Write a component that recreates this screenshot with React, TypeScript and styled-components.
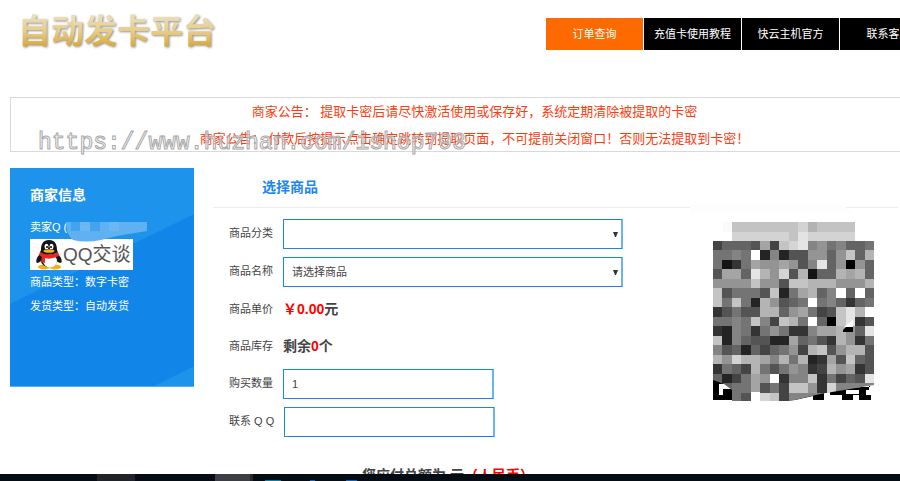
import React from "react";
import styled, { createGlobalStyle } from "styled-components";

const Global = createGlobalStyle`
  * { box-sizing: border-box; }
  body {
    margin: 0;
    background: #fff;
    color: #444;
    font: 11px/20px "Liberation Sans", "Noto Sans CJK SC", sans-serif;
  }
  button, input, select { font: inherit; color: inherit; }
`;

const Page = styled.div`
  display: flex;
  flex-direction: column;
  height: 100vh;
  overflow: hidden;
`;

const Content = styled.div`
  flex: 1;
  min-height: 0;
  overflow: hidden;
`;

const Header = styled.header`
  display: flex;
  justify-content: space-between;
  height: 97px;
  padding-left: 18px;
`;

const Logo = styled.h1`
  margin: 6px 0 0;
  height: 48px;
  font: 700 33px/46px "Noto Sans CJK SC", sans-serif;
  white-space: nowrap;
  color: transparent;
  background: linear-gradient(#ebdcb4 25%, #e6cb82 55%, #dcab38 82%);
  background-clip: text;
  filter: drop-shadow(1px 1px 1px rgba(70, 70, 80, 0.6));
`;

const Nav = styled.nav`
  display: flex;
  gap: 1px;
  width: 354px;
  margin-top: 18px;
  overflow: hidden;
`;

const NavLink = styled.a<{ $active?: boolean }>`
  flex: none;
  width: 97px;
  height: 32px;
  line-height: 32px;
  text-align: center;
  text-decoration: none;
  color: #fff;
  background: ${(p) => (p.$active ? "#ff6a00" : "#000")};
`;

const Notice = styled.section`
  position: relative;
  height: 55px;
  margin-left: 10px;
  padding-left: 38px;
  border: 1px solid #d9d9d9;
  border-right: 0;
  text-align: center;
  font-size: 13px;
  line-height: 27px;
  color: #ff3c0f;
  white-space: pre;
`;

const NoticeLine = styled.p`
  margin: 0;
  height: 27px;
`;

const Watermark = styled.span`
  position: absolute;
  left: 27px;
  bottom: -6px;
  font: 23px/28px "Liberation Mono", monospace;
  color: rgba(255, 255, 255, 0.5);
  -webkit-text-stroke: 1px #a8a8a8;
`;

const Body = styled.div`
  display: flex;
  gap: 19px;
  align-items: flex-start;
  padding: 16px 0 0 10px;
`;

const Sidebar = styled.aside`
  position: relative;
  flex: none;
  width: 184px;
  height: 219px;
  padding: 17px 20px;
  color: #fff;
  border-bottom: 1px solid #58aef2;
  background: linear-gradient(154deg, #1e93ec 44%, #1285e9 44.3%, #1285e9 93.5%, #1e93ec 93.8%);
`;

const SideTitle = styled.h2`
  margin: 0 0 10px;
  font-size: 14px;
  line-height: 20px;
`;

const SideLine = styled.p`
  margin: 0;
  line-height: 24px;
  height: 24px;
  white-space: pre;
`;

const Smudge = styled.svg`
  position: absolute;
  left: 55px;
  top: 54px;
`;

const ChatLink = styled.a`
  display: flex;
  align-items: center;
  width: 103px;
  height: 31px;
  padding-left: 5px;
  background: #fff;
  color: #555;
  font-size: 19px;
  line-height: 30px;
  text-decoration: none;
  white-space: nowrap;
`;

const Main = styled.main`
  flex: 1;
  min-width: 0;
`;

const SectionTitle = styled.h2`
  margin: 0 2px 0 0;
  padding: 0 0 0 49px;
  height: 40px;
  border-bottom: 1px solid #ededed;
  font-size: 14px;
  line-height: 38px;
  color: #1c86ee;
`;

const Columns = styled.div`
  display: flex;
  justify-content: space-between;
`;

const Form = styled.form`
  flex: 0 1 410px;
  padding: 11px 0 0 16px;
`;

const Row = styled.div<{ $text?: boolean; $indent?: boolean }>`
  display: grid;
  grid-template-columns: ${(p) => (p.$indent ? "55px" : "54px")} 1fr;
  height: ${(p) => (p.$text ? 29 : 30)}px;
  margin-bottom: 8px;
`;

const Label = styled.label`
  line-height: 28px;
  white-space: nowrap;
`;

const SelectBox = styled.div`
  position: relative;
  height: 30px;
`;

const Select = styled.select`
  appearance: none;
  display: block;
  width: 100%;
  height: 30px;
  padding: 0 8px;
  border: 1px solid #1c86e3;
  border-right: 2px solid #6bb2f4;
  border-radius: 0;
  background: #fff;
`;

const Arrow = styled.svg`
  position: absolute;
  right: 5px;
  top: 13px;
  pointer-events: none;
`;

const Input = styled.input`
  width: 211px;
  height: 30px;
  padding: 0 8px;
  border: 1px solid #1c86e3;
  border-right: 2px solid #6bb2f4;
  border-radius: 0;
  background: #fff;
`;

const Value = styled.output`
  font-size: 14px;
  font-weight: 700;
  line-height: 29px;
`;

const Red = styled.span`
  color: #f00;
`;

const Total = styled.p`
  margin: 14px 0 0 149px;
  font-size: 14px;
  font-weight: 700;
  line-height: 32px;
  white-space: pre;
`;

const Code = styled.svg`
  flex: none;
  margin-top: -8px;
`;

const Taskbar = styled.footer`
  flex: none;
  height: 7px;
  background: #050c14;
  overflow: hidden;
`;

const TrayIcons = styled.svg`
  display: block;
`;

const shades = [
  "46665a4cde8978667",
  "7787f282559969c6b",
  "7137a99a958e69096",
  "5aa6eb9d5b166bab6",
  "9999c995ccbbb999b",
  "c57775c27ab68f6f6",
  "c7c72b9567f786367",
  "35755bb69a745cebf",
  "7787c84cb7f60ce35",
  "32873797338aab96e",
  "c2865522a6753b937",
  "8562646794bc59bb5",
  "b9dbba8b7b23a5c65",
  "3764b7579834b9a35",
  "6247a9f388c37465e",
  "8677a574cc93d8888",
  "8875fdc4888888888",
];
const edges = Array.from({ length: 18 }, (_, i) => Math.round((i * 161) / 17));
const topStrip = ["cccccccdbcccc", "ddddddceddddd"];

function Mosaic() {
  return (
    <Code width="210" height="210" viewBox="0 0 210 210" role="img" aria-label="二维码">
      <path d="M0 13L0 6Q2 4 8 4L150 4L165 13Z" fill="#fdfdfd" />
      <g shapeRendering="crispEdges">
        <rect x="33" y="22" width="9" height="10" fill="#fafafa" />
        {topStrip.map((row, y) =>
          row.split("").map((c, x) => (
            <rect
              key={`${x}-${y}`}
              x={42 + edges[x]}
              y={y ? 32 : 22}
              width={edges[x + 1] - edges[x]}
              height={y ? 9 : 10}
              fill={`#${c}3${c}3${c}3`}
            />
          ))
        )}
      </g>
      <path d="M23 180h19v20H23z" fill="#000" />
      <path d="M29 184h13v5h-9v6h-4z" fill="#fff" />
      <path d="M101 200L120 193H134V200H123V196L105 200Z" fill="#000" />
      <path d="M130 194L152 189L181 186V190H172V195H163V200H152V195H140V192Z M179 190h2v-4h-2z M169 190h7v5h5v5h-12z" fill="#000" />
      <path d="M156 190h13v4h-13z" fill="#fff" />
      <clipPath id="code-clip">
        <path d="M23 41H184V185L160 189L130 194L101 201H42V190L34 184L23 180Z" />
      </clipPath>
      <g clipPath="url(#code-clip)" shapeRendering="crispEdges">
        {shades.map((row, y) =>
          row.split("").map((c, x) => (
            <rect
              key={`${x}-${y}`}
              x={23 + edges[x]}
              y={41 + edges[y]}
              width={edges[x + 1] - edges[x]}
              height={edges[y + 1] - edges[y]}
              fill={c === "f" ? "#fff" : c === "0" ? "#000" : `#${c}4${c}4${c}4`}
            />
          ))
        )}
        <rect x="61" y="192" width="9" height="10" fill="#fff" />
      </g>
      <path d="M163 120v7h-9z" fill="#fff" />
      <path d="M156 127h7v5h-10v-2z" fill="#000" />
    </Code>
  );
}

function Penguin() {
  return (
    <svg width="28" height="31" viewBox="0 0 28 31" aria-hidden="true">
      <ellipse cx="9" cy="28" rx="6" ry="2.5" fill="#f4b018" />
      <ellipse cx="20" cy="28" rx="6" ry="2.5" fill="#f4b018" />
      <path d="M5 15C1 19 0 24 3 24L6 22M23 15C27 19 28 24 25 24L21 22" fill="#14171c" />
      <path d="M14 1C7 1 6 7 6 11C3 17 5 28 14 28S25 17 22 11C22 7 21 1 14 1Z" fill="#111419" />
      <ellipse cx="15" cy="22" rx="7" ry="6.5" fill="#fff" />
      <ellipse cx="11.5" cy="7.5" rx="2" ry="2.7" fill="#fff" />
      <ellipse cx="16.5" cy="7.5" rx="2" ry="2.7" fill="#fff" />
      <circle cx="12" cy="8" r="1" />
      <circle cx="16" cy="8" r="1" />
      <ellipse cx="14" cy="12" rx="5.5" ry="1.8" fill="#f5b21a" />
      <path d="M5 13Q13 18 23 13L24 17Q15 21 10 19V24L6 23L7 18L4 16Z" fill="#e32a22" />
    </svg>
  );
}

function DownArrow() {
  return (
    <Arrow width="5" height="5" viewBox="0 0 5 5" aria-hidden="true">
      <path d="M0 0h5L3 5H2z" fill="#333" />
    </Arrow>
  );
}

export default function App() {
  return (
    <>
      <Global />
      <Page>
        <Content>
          <Header>
            <Logo>自动发卡平台</Logo>
            <Nav>
              <NavLink href="#order" $active>订单查询</NavLink>
              <NavLink href="#guide">充值卡使用教程</NavLink>
              <NavLink href="#host">快云主机官方</NavLink>
              <NavLink href="#contact">联系客服</NavLink>
            </Nav>
          </Header>
          <Notice>
            <NoticeLine>商家公告： 提取卡密后请尽快激活使用或保存好，系统定期清除被提取的卡密</NoticeLine>
            <NoticeLine>商家公告： 付款后按提示点击确定跳转到提取页面，不可提前关闭窗口！否则无法提取到卡密！</NoticeLine>
            <Watermark>https://www.huzhan.com/ishop793</Watermark>
          </Notice>
          <Body>
            <Sidebar>
              <SideTitle>商家信息</SideTitle>
              <SideLine>卖家Q (</SideLine>
              <ChatLink href="#chat">
                <Penguin />
                QQ交谈
              </ChatLink>
              <SideLine>商品类型：数字卡密</SideLine>
              <SideLine>发货类型：自动发货</SideLine>
              <Smudge width="84" height="20" viewBox="0 0 84 20" aria-hidden="true">
                <path d="M1 0H82V9L52 14L36 18Q20 21 8 18Q1 12 1 0Z" fill="#5fb1f1" />
                <path d="M6 0h9v9H6zM25 0h10v9H25z" fill="#45a3ee" />
                <path d="M15 0h10v9H15zM44 0h10v9H44z" fill="#6bb6f3" />
              </Smudge>
            </Sidebar>
            <Main>
              <SectionTitle>选择商品</SectionTitle>
              <Columns>
                <Form>
                  <Row>
                    <Label htmlFor="category">商品分类</Label>
                    <SelectBox>
                      <Select id="category"><option></option></Select>
                      <DownArrow />
                    </SelectBox>
                  </Row>
                  <Row>
                    <Label htmlFor="product">商品名称</Label>
                    <SelectBox>
                      <Select id="product"><option>请选择商品</option></Select>
                      <DownArrow />
                    </SelectBox>
                  </Row>
                  <Row $text>
                    <Label htmlFor="price">商品单价</Label>
                    <Value id="price"><Red>￥0.00</Red>元</Value>
                  </Row>
                  <Row $text>
                    <Label htmlFor="stock">商品库存</Label>
                    <Value id="stock">剩余<Red>0</Red>个</Value>
                  </Row>
                  <Row>
                    <Label htmlFor="amount">购买数量</Label>
                    <Input id="amount" defaultValue="1" />
                  </Row>
                  <Row $indent>
                    <Label htmlFor="qq">联系 Q Q</Label>
                    <Input id="qq" />
                  </Row>
                </Form>
                <Mosaic />
              </Columns>
              <Total>您应付总额为 元<Red>（人民币）</Red></Total>
            </Main>
          </Body>
        </Content>
        <Taskbar>
          <TrayIcons width="400" height="7" viewBox="0 0 400 7" aria-hidden="true">
            <path d="M97 0h38v7H97z" fill="#202428" />
            <path d="M215 0h35v7h-35z" fill="#3b3e42" />
            <path d="M250 0h3v7h-3z" fill="#25292d" />
            <path d="M265 6h16v1h-16z" fill="#0b7fa0" />
            <path d="M310 6h5v1h-5zM346 6h11v1h-11z" fill="#1263b5" />
          </TrayIcons>
        </Taskbar>
      </Page>
    </>
  );
}
